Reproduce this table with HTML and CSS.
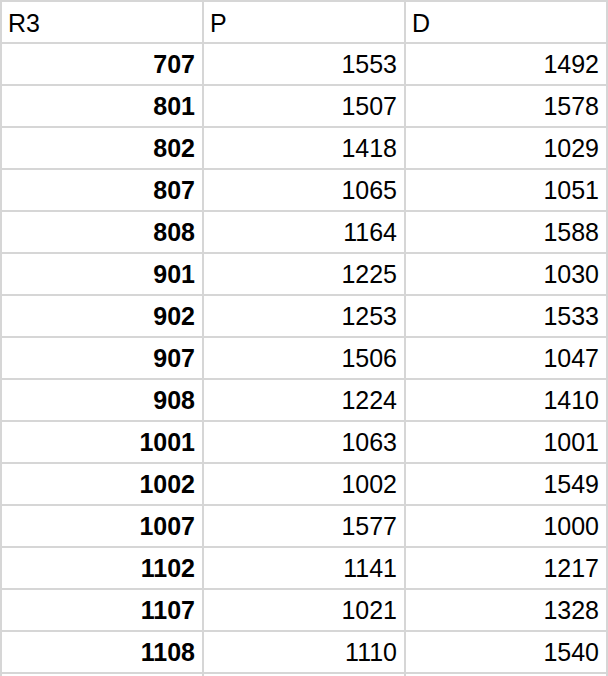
FILE: index.html
```html
<!DOCTYPE html>
<html>
<head>
<meta charset="utf-8">
<link rel="stylesheet" href="styles.css">
</head>
<body>
<div class="sheet">
  <div class="cell head">R3</div><div class="cell head">P</div><div class="cell head">D</div>
  <div class="cell num key">707</div><div class="cell num">1553</div><div class="cell num">1492</div>
  <div class="cell num key">801</div><div class="cell num">1507</div><div class="cell num">1578</div>
  <div class="cell num key">802</div><div class="cell num">1418</div><div class="cell num">1029</div>
  <div class="cell num key">807</div><div class="cell num">1065</div><div class="cell num">1051</div>
  <div class="cell num key">808</div><div class="cell num">1164</div><div class="cell num">1588</div>
  <div class="cell num key">901</div><div class="cell num">1225</div><div class="cell num">1030</div>
  <div class="cell num key">902</div><div class="cell num">1253</div><div class="cell num">1533</div>
  <div class="cell num key">907</div><div class="cell num">1506</div><div class="cell num">1047</div>
  <div class="cell num key">908</div><div class="cell num">1224</div><div class="cell num">1410</div>
  <div class="cell num key">1001</div><div class="cell num">1063</div><div class="cell num">1001</div>
  <div class="cell num key">1002</div><div class="cell num">1002</div><div class="cell num">1549</div>
  <div class="cell num key">1007</div><div class="cell num">1577</div><div class="cell num">1000</div>
  <div class="cell num key">1102</div><div class="cell num">1141</div><div class="cell num">1217</div>
  <div class="cell num key">1107</div><div class="cell num">1021</div><div class="cell num">1328</div>
  <div class="cell num key">1108</div><div class="cell num">1110</div><div class="cell num">1540</div>
  <div class="cell"></div><div class="cell"></div><div class="cell"></div>
</div>
</body>
</html>
```

FILE: styles.css
```css
html, body {
  margin: 0;
  padding: 0;
  background: #ffffff;
  overflow: hidden;
}
.sheet {
  display: grid;
  grid-template-columns: 200px 200px 200px;
  grid-auto-rows: 40px;
  gap: 2px;
  padding: 2px;
  width: 604px;
  background: #d6d6d6;
  font-family: "Liberation Sans", Arial, sans-serif;
  font-size: 25px;
  color: #000000;
}
.cell {
  background: #ffffff;
  display: flex;
  align-items: center;
  white-space: nowrap;
}
.head {
  padding-left: 6px;
  padding-top: 3px;
}
.num {
  justify-content: flex-end;
  padding-right: 7px;
}
.key {
  font-weight: bold;
}
```
